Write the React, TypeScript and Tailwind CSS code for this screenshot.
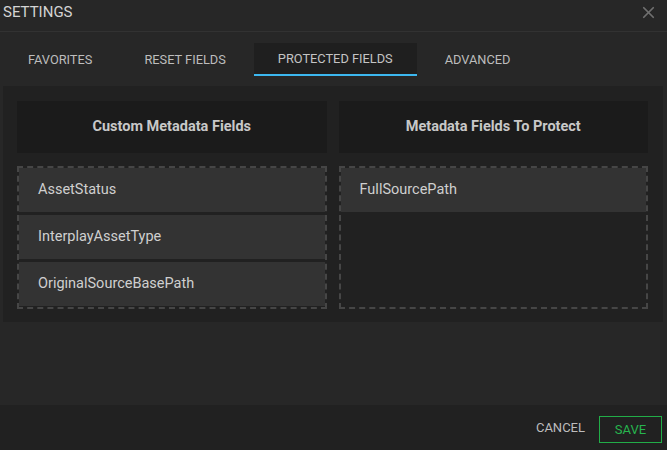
import { X } from "lucide-react";

const tabs = ["FAVORITES", "RESET FIELDS", "PROTECTED FIELDS", "ADVANCED"];
const active = "PROTECTED FIELDS";

const customFields = ["AssetStatus", "InterplayAssetType", "OriginalSourceBasePath"];
const protectedFields = ["FullSourcePath"];

function FieldColumn({ title, items }: { title: string; items: string[] }) {
  return (
    <div className="flex flex-col">
      <div className="h-[52px] bg-[#1b1b1b] flex items-center justify-center text-[14.5px] font-bold text-[#c8c8c8]">
        {title}
      </div>
      <div className="mt-[13px] h-[143px] border-2 border-dashed border-[#464646] flex flex-col gap-[3px]">
        {items.map((item) => (
          <div
            key={item}
            className="h-[44px] shrink-0 bg-[#333333] flex items-center pl-[19px] text-[14.5px] text-[#cfcfcf]"
          >
            {item}
          </div>
        ))}
      </div>
    </div>
  );
}

export default function App() {
  return (
    <div className="w-[667px] h-[450px] bg-[#272727] flex flex-col font-['Roboto',sans-serif] overflow-hidden">
      {/* Header */}
      <div className="h-[32px] border-b border-[#323232] flex items-center justify-between pl-[3px] pr-[9px] pb-[7px]">
        <span className="text-[15px] text-[#d4d4d4]">SETTINGS</span>
        <X className="w-[19px] h-[19px] text-[#707070]" strokeWidth={2.2} />
      </div>

      {/* Tabs */}
      <div className="mt-[11px] h-[33px] flex gap-1 pl-1">
        {tabs.map((t) => (
          <div
            key={t}
            className={
              t === active
                ? "px-6 flex items-center text-[12.8px] text-[#c4c4c4] bg-[#1f1f1f] border-b-[2px] border-[#3cb7ef]"
                : "px-6 flex items-center text-[12.8px] text-[#bdbdbd]"
            }
          >
            {t}
          </div>
        ))}
      </div>

      {/* Content */}
      <div className="mt-[10px] ml-[3px] mr-[4px] bg-[#212121] pl-[14px] pr-[15px] pt-[15px] pb-[13px] grid grid-cols-2 gap-[12px]">
        <FieldColumn title="Custom Metadata Fields" items={customFields} />
        <FieldColumn title="Metadata Fields To Protect" items={protectedFields} />
      </div>

      <div className="flex-1" />

      {/* Footer */}
      <div className="h-[45px] bg-[#212121] flex items-center justify-end gap-[14px] pr-[5px]">
        <span className="text-[13px] text-[#bdbdbd]">CANCEL</span>
        <button className="w-[63px] h-[27px] mt-[4px] border border-[#22ad48] text-[13px] text-[#27b44e] flex items-center justify-center">
          SAVE
        </button>
      </div>
    </div>
  );
}
